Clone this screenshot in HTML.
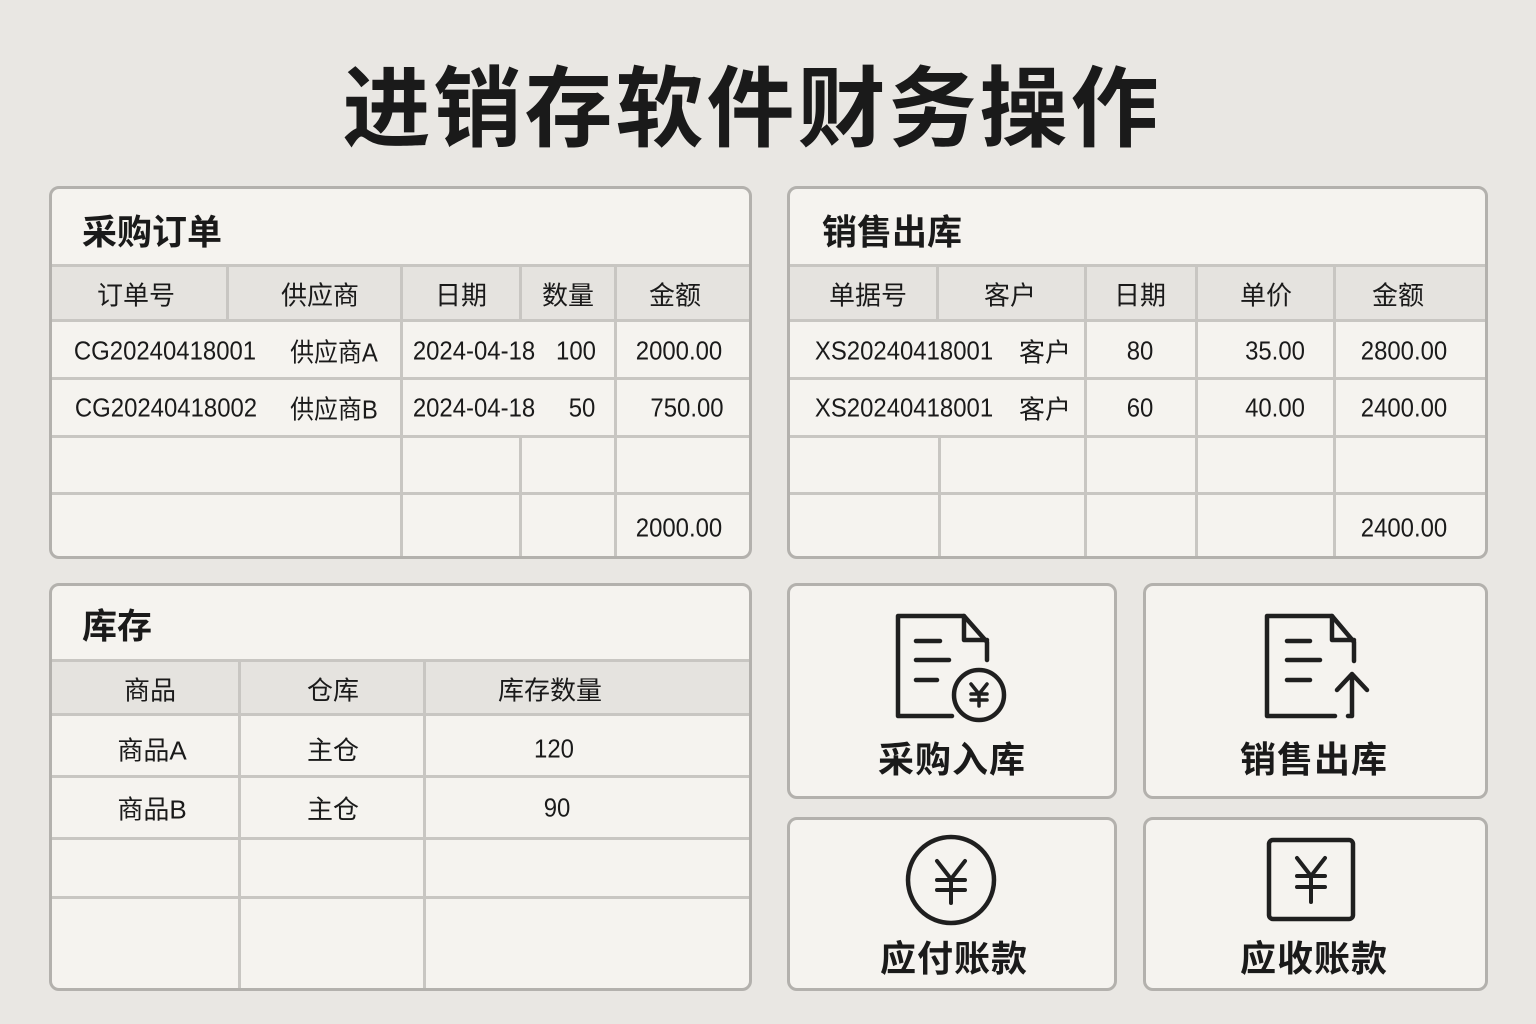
<!DOCTYPE html>
<html><head><meta charset="utf-8"><style>
body{margin:0;width:1536px;height:1024px;background:#e9e7e3;position:relative;overflow:hidden;font-family:"Liberation Sans","Noto Sans CJK SC",sans-serif;color:#1a1a1a}
.p{position:absolute;background:#f5f3ef;border:3px solid #b3b1ad;border-radius:10px;box-sizing:border-box;overflow:hidden}
.hd{position:absolute;background:#e5e3df}
.h{position:absolute;height:3px;background:#c8c6c2}
.v{position:absolute;width:3px;background:#c8c6c2}
.t{position:absolute;transform:translate(-50%,-50%);white-space:nowrap;font-size:26px}
.n{transform:translate(-50%,-50%) scaleX(0.92)}
.ti{position:absolute;font-size:35px;font-weight:bold;transform:translateY(-50%)}
.b{font-size:36px;font-weight:bold;letter-spacing:1px}
</style></head><body>
<div class="t" style="left:752px;top:102px;font-size:88px;font-weight:bold;letter-spacing:3px">进销存软件财务操作</div>

<div class="p" style="left:49px;top:186px;width:703px;height:373px"></div>
<div class="hd" style="left:52px;top:266px;width:697px;height:54px"></div>
<div class="ti" style="left:82px;top:230px">采购订单</div>
<div class="h" style="left:52px;top:264px;width:697px"></div>
<div class="h" style="left:52px;top:319px;width:697px"></div>
<div class="h" style="left:52px;top:377px;width:697px"></div>
<div class="h" style="left:52px;top:435px;width:697px"></div>
<div class="h" style="left:52px;top:492px;width:697px"></div>
<div class="v" style="left:226px;top:266px;height:54px"></div>
<div class="v" style="left:400px;top:266px;height:290px"></div>
<div class="v" style="left:519px;top:266px;height:54px"></div>
<div class="v" style="left:519px;top:436px;height:120px"></div>
<div class="v" style="left:614px;top:266px;height:290px"></div>
<div class="t" style="left:136px;top:294px">订单号</div>
<div class="t" style="left:320px;top:294px">供应商</div>
<div class="t" style="left:461px;top:294px">日期</div>
<div class="t" style="left:568px;top:294px">数量</div>
<div class="t" style="left:675px;top:294px">金额</div>
<div class="t n" style="left:165px;top:351px">CG20240418001</div>
<div class="t n" style="left:334px;top:351px">供应商A</div>
<div class="t n" style="left:474px;top:351px">2024-04-18</div>
<div class="t n" style="left:576px;top:351px">100</div>
<div class="t n" style="left:679px;top:351px">2000.00</div>
<div class="t n" style="left:166px;top:408px">CG20240418002</div>
<div class="t n" style="left:334px;top:408px">供应商B</div>
<div class="t n" style="left:474px;top:408px">2024-04-18</div>
<div class="t n" style="left:582px;top:408px">50</div>
<div class="t n" style="left:687px;top:408px">750.00</div>
<div class="t n" style="left:679px;top:528px">2000.00</div>

<div class="p" style="left:787px;top:186px;width:701px;height:373px"></div>
<div class="hd" style="left:790px;top:266px;width:695px;height:54px"></div>
<div class="ti" style="left:822px;top:230px">销售出库</div>
<div class="h" style="left:790px;top:264px;width:695px"></div>
<div class="h" style="left:790px;top:319px;width:695px"></div>
<div class="h" style="left:790px;top:377px;width:695px"></div>
<div class="h" style="left:790px;top:435px;width:695px"></div>
<div class="h" style="left:790px;top:492px;width:695px"></div>
<div class="v" style="left:936px;top:266px;height:54px"></div>
<div class="v" style="left:938px;top:436px;height:120px"></div>
<div class="v" style="left:1084px;top:266px;height:290px"></div>
<div class="v" style="left:1195px;top:266px;height:290px"></div>
<div class="v" style="left:1333px;top:266px;height:290px"></div>
<div class="t" style="left:868px;top:294px">单据号</div>
<div class="t" style="left:1010px;top:294px">客户</div>
<div class="t" style="left:1140px;top:294px">日期</div>
<div class="t" style="left:1266px;top:294px">单价</div>
<div class="t" style="left:1398px;top:294px">金额</div>
<div class="t n" style="left:904px;top:351px">XS20240418001</div>
<div class="t" style="left:1045px;top:351px">客户</div>
<div class="t n" style="left:1140px;top:351px">80</div>
<div class="t n" style="left:1275px;top:351px">35.00</div>
<div class="t n" style="left:1404px;top:351px">2800.00</div>
<div class="t n" style="left:904px;top:408px">XS20240418001</div>
<div class="t" style="left:1045px;top:408px">客户</div>
<div class="t n" style="left:1140px;top:408px">60</div>
<div class="t n" style="left:1275px;top:408px">40.00</div>
<div class="t n" style="left:1404px;top:408px">2400.00</div>
<div class="t n" style="left:1404px;top:528px">2400.00</div>

<div class="p" style="left:49px;top:583px;width:703px;height:408px"></div>
<div class="hd" style="left:52px;top:661px;width:697px;height:53px"></div>
<div class="ti" style="left:82px;top:624px">库存</div>
<div class="h" style="left:52px;top:659px;width:697px"></div>
<div class="h" style="left:52px;top:713px;width:697px"></div>
<div class="h" style="left:52px;top:775px;width:697px"></div>
<div class="h" style="left:52px;top:837px;width:697px"></div>
<div class="h" style="left:52px;top:896px;width:697px"></div>
<div class="v" style="left:238px;top:661px;height:327px"></div>
<div class="v" style="left:423px;top:661px;height:327px"></div>
<div class="t" style="left:150px;top:689px">商品</div>
<div class="t" style="left:333px;top:689px">仓库</div>
<div class="t" style="left:550px;top:689px">库存数量</div>
<div class="t" style="left:152px;top:749px">商品A</div>
<div class="t" style="left:333px;top:749px">主仓</div>
<div class="t n" style="left:554px;top:749px">120</div>
<div class="t" style="left:152px;top:808px">商品B</div>
<div class="t" style="left:333px;top:808px">主仓</div>
<div class="t n" style="left:557px;top:808px">90</div>

<div class="p" style="left:787px;top:583px;width:330px;height:216px"></div>
<div class="p" style="left:1143px;top:583px;width:345px;height:216px"></div>
<div class="p" style="left:787px;top:817px;width:330px;height:174px"></div>
<div class="p" style="left:1143px;top:817px;width:345px;height:174px"></div>

<svg style="position:absolute;left:0;top:0" width="1536" height="1024" fill="none" stroke="#1f1f1f" stroke-width="4.5" stroke-linecap="round" stroke-linejoin="round">
 <path d="M952 716 H898 V616 H964 L987 642 V660"/><path d="M964 616 V640 H987"/>
 <path d="M916 641 H940 M916 660 H949 M916 680 H937"/>
 <circle cx="979" cy="695" r="25"/>
 <path d="M971 684 L979 694 L987 684 M979 694 V706 M971 694 H987 M971 700 H987" stroke-width="3.5"/>

 <path d="M1335 716 H1267 V616 H1332 L1354 642 V661"/><path d="M1332 616 V640 H1354"/>
 <path d="M1287 641 H1310 M1287 660 H1320 M1287 680 H1310"/>
 <path d="M1348 716 H1352 V674 M1337 690 L1352 674 L1367 690"/>

 <circle cx="951" cy="880" r="43"/>
 <path d="M937 861 L951 879 L965 861 M951 879 V903 M937 880 H965 M937 890 H965" stroke-width="4"/>

 <rect x="1269" y="840" width="84" height="79" rx="4"/>
 <path d="M1297 858 L1311 876 L1325 858 M1311 876 V902 M1297 876 H1325 M1297 887 H1325" stroke-width="4"/>
</svg>
<div class="t b" style="left:952px;top:757px">采购入库</div>
<div class="t b" style="left:1314px;top:757px">销售出库</div>
<div class="t b" style="left:954px;top:956px">应付账款</div>
<div class="t b" style="left:1314px;top:956px">应收账款</div>
</body></html>
